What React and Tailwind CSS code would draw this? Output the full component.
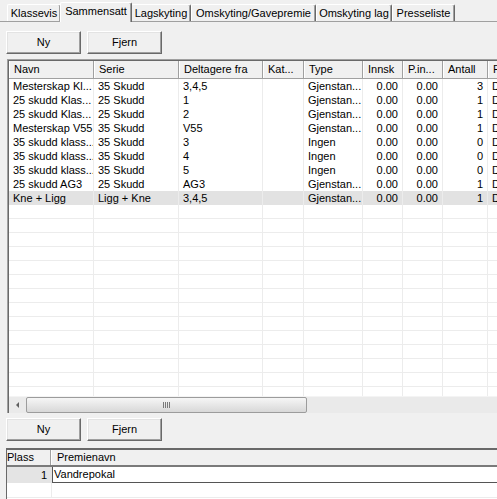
import React from "react";

const cols = [
  { w: 85, h: "Navn" },
  { w: 85, h: "Serie" },
  { w: 84, h: "Deltagere fra" },
  { w: 41, h: "Kat..." },
  { w: 59, h: "Type" },
  { w: 40, h: "Innsk", r: true },
  { w: 40, h: "P.in...", r: true },
  { w: 45, h: "Antall", r: true },
  { w: 60, h: "F..." },
];

const rows = [
  ["Mesterskap Kl...", "35 Skudd", "3,4,5", "", "Gjenstan...", "0.00", "0.00", "3", "D..."],
  ["25 skudd Klas...", "25 Skudd", "1", "", "Gjenstan...", "0.00", "0.00", "1", "D..."],
  ["25 skudd Klas...", "25 Skudd", "2", "", "Gjenstan...", "0.00", "0.00", "1", "D..."],
  ["Mesterskap V55", "35 Skudd", "V55", "", "Gjenstan...", "0.00", "0.00", "1", "D..."],
  ["35 skudd klass...", "35 Skudd", "3", "", "Ingen", "0.00", "0.00", "0", "D..."],
  ["35 skudd klass...", "35 Skudd", "4", "", "Ingen", "0.00", "0.00", "0", "D..."],
  ["35 skudd klass...", "35 Skudd", "5", "", "Ingen", "0.00", "0.00", "0", "D..."],
  ["25 skudd AG3", "25 Skudd", "AG3", "", "Gjenstan...", "0.00", "0.00", "1", "D..."],
  ["Kne + Ligg", "Ligg + Kne", "3,4,5", "", "Gjenstan...", "0.00", "0.00", "1", "D..."],
];

const tabs = [
  { t: "Klassevis", w: 54 },
  { t: "Sammensatt", w: 72, sel: true },
  { t: "Lagskyting", w: 60 },
  { t: "Omskyting/Gavepremie", w: 125 },
  { t: "Omskyting lag", w: 76 },
  { t: "Presseliste", w: 63 },
];

function Btn({ children }) {
  return (
    <button className="w-[75px] h-[23px] bg-[#f0f0f0] border-t border-l border-t-white border-l-white border-r border-b border-r-[#696969] border-b-[#696969] shadow-[inset_-1px_-1px_0_#a0a0a0,inset_1px_1px_0_#e3e3e3] text-black text-[11px] leading-none flex items-center justify-center">
      {children}
    </button>
  );
}

export default function App() {
  return (
    <div
      className="w-[497px] h-[499px] bg-[#f0f0f0] overflow-hidden text-[11px] text-black leading-none"
      style={{ fontFamily: '"Liberation Sans", Arial, sans-serif' }}
    >
      {/* tabs */}
      <div className="flex items-end h-[22px] border-b border-[#a0a0a0] pl-[7px]">
        {tabs.map((t) =>
          t.sel ? (
            <div
              key={t.t}
              style={{ width: t.w }}
              className="relative z-10 h-[20px] mb-[-1px] bg-[#f0f0f0] border-t border-l border-white border-r border-r-[#696969] shadow-[inset_-1px_0_0_#a0a0a0] rounded-t-[2px] flex items-start justify-center pt-[3px] ml-[-1px] mr-[-1px]"
            >
              {t.t}
            </div>
          ) : (
            <div
              key={t.t}
              style={{ width: t.w }}
              className="h-[17px] bg-[#f0f0f0] border-t border-l border-white border-r border-r-[#696969] shadow-[inset_-1px_0_0_#a0a0a0] rounded-t-[2px] flex items-center justify-center"
            >
              {t.t}
            </div>
          )
        )}
      </div>

      <div className="flex gap-[6px] ml-[6px] mt-[9px]">
        <Btn>Ny</Btn>
        <Btn>Fjern</Btn>
      </div>

      {/* main grid */}
      <div className="mt-[5px] ml-[7px] h-[354px] border-t border-l border-[#a0a0a0]">
        <div className="h-full border-t border-l border-[#696969] bg-white flex flex-col overflow-hidden">
          <div className="flex h-[18px] shrink-0 bg-[#f0f0f0] border-b border-[#a0a0a0]">
            {cols.map((c) => (
              <div
                key={c.h}
                style={{ width: c.w }}
                className="shrink-0 h-full border-r border-[#a0a0a0] shadow-[inset_1px_0_0_#fff] pl-[5px] flex items-center whitespace-nowrap overflow-hidden"
              >
                {c.h}
              </div>
            ))}
          </div>
          <div className="h-[317px] shrink-0 overflow-hidden">
            {rows.map((r, i) => (
              <div key={i} className={`flex h-[14px] ${i === 8 ? "bg-[#e2e2e2]" : ""}`}>
                {cols.map((c, j) => (
                  <div
                    key={j}
                    style={{ width: c.w }}
                    className={`shrink-0 h-full border-r border-[#ececec] flex items-center whitespace-nowrap overflow-hidden ${c.r ? "justify-end pr-[4px]" : "pl-[4px]"}`}
                  >
                    {r[j]}
                  </div>
                ))}
              </div>
            ))}
            {Array.from({ length: 14 }).map((_, i) => (
              <div key={"e" + i} className="flex h-[14px] border-b border-[#ececec]">
                {cols.map((c, j) => (
                  <div key={j} style={{ width: c.w }} className="shrink-0 h-full border-r border-[#ececec]" />
                ))}
              </div>
            ))}
          </div>
          {/* scrollbar */}
          <div className="h-[17px] shrink-0 flex bg-[#eaeaea] border-t border-[#f4f4f4]">
            <div className="w-[17px] h-full flex items-center justify-center">
              <div className="w-0 h-0 border-y-[3px] border-y-transparent border-r-[3px] border-r-[#606060]" />
            </div>
            <div className="w-[281px] h-full border border-[#9c9c9c] rounded-[2px] bg-gradient-to-b from-[#f6f6f6] to-[#d8d8d8] flex items-center justify-center gap-[1px]">
              <div className="w-px h-[6px] bg-[#7a7a7a]" />
              <div className="w-px h-[6px] bg-[#7a7a7a]" />
              <div className="w-px h-[6px] bg-[#7a7a7a]" />
              <div className="w-px h-[6px] bg-[#7a7a7a]" />
            </div>
          </div>
        </div>
      </div>

      <div className="flex gap-[6px] ml-[6px] mt-[5px]">
        <Btn>Ny</Btn>
        <Btn>Fjern</Btn>
      </div>

      {/* bottom grid */}
      <div className="mt-[7px] ml-[6px] h-[60px] border-t-2 border-l border-[#696969] bg-white overflow-hidden">
        <div className="flex h-[17px] bg-[#f0f0f0] border-b-2 border-[#7a7a7a]">
          <div className="w-[44px] shrink-0 h-full border-r border-[#a0a0a0] flex items-center">Plass</div>
          <div className="flex-1 h-full shadow-[inset_1px_0_0_#fff] pl-[6px] flex items-center">Premienavn</div>
        </div>
        <div className="flex h-[16px]">
          <div className="w-[45px] shrink-0 h-full bg-[#e4e4e4] flex items-center justify-end pr-[5px]">1</div>
          <div className="flex-1 h-full border-l border-b border-[#555] pl-[1px] flex items-center">Vandrepokal</div>
        </div>
        <div className="flex h-[15px] border-b border-[#ececec]">
          <div className="w-[45px] shrink-0 h-full border-r border-[#ececec]" />
          <div className="flex-1" />
        </div>
      </div>
    </div>
  );
}
